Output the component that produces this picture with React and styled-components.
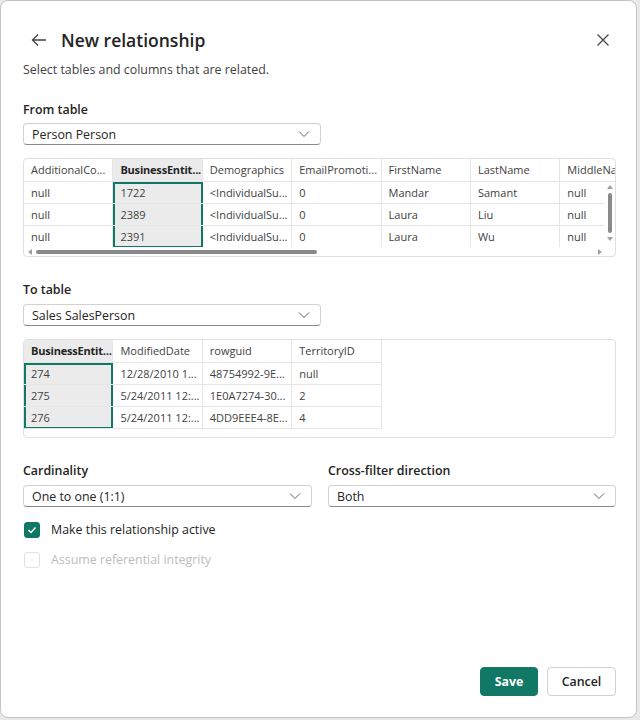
import React from "react";
import styled, { createGlobalStyle } from "styled-components";

const GREEN = "#117865";
const FONT = `"Segoe UI", "Open Sans", "Noto Sans", sans-serif`;

const Global = createGlobalStyle`
  html, body {
    margin: 0;
    padding: 0;
    background: #e9e9e9;
  }
  body {
    font-family: ${FONT};
    color: #242424;
  }
  * { box-sizing: border-box; }
`;

const Dialog = styled.div`
  width: 637px;
  height: 718px;
  background: #fff;
  border: 1px solid #c4c4c4;
  border-radius: 8px;
  padding: 0 20px 21px 22px;
  display: flex;
  flex-direction: column;
`;

const Header = styled.div`
  display: flex;
  align-items: center;
  height: 26px;
  margin-top: 26px;
`;

const IconButton = styled.button`
  border: none;
  background: none;
  padding: 0;
  display: flex;
  align-items: center;
  justify-content: center;
  color: #424242;
  cursor: pointer;
`;

const Title = styled.h1`
  margin: 0 0 0 13px;
  font-size: 17.5px;
  font-weight: 600;
  flex: 1;
`;

const Subtitle = styled.p`
  margin: 7px 0 0 0;
  font-size: 12.4px;
  color: #424242;
  line-height: 20px;
`;

const Label = styled.div`
  font-size: 12.4px;
  font-weight: 600;
  line-height: 20px;
  margin-top: ${(p) => p.$top || 0}px;
`;

const Select = styled.div`
  margin-top: ${(p) => p.$gap ?? 4}px;
  width: ${(p) => p.$width}px;
  height: 22px;
  border: 1px solid #d1d1d1;
  border-bottom-color: #8a8a8a;
  border-radius: 4px;
  display: flex;
  align-items: center;
  justify-content: space-between;
  padding: 0 10px 0 8px;
  font-size: 12.4px;
`;

const Frame = styled.div`
  margin-top: 13px;
  width: 593px;
  height: 99px;
  border: 1px solid #e0e0e0;
  border-radius: 4px;
  overflow: hidden;
  display: flex;
  flex-direction: column;
`;

const FrameTop = styled.div`
  flex: 1;
  display: flex;
  min-height: 0;
  position: relative;
`;

const Viewport = styled.div`
  flex: 1;
  min-width: 0;
  display: flex;
  align-items: flex-start;
  overflow: hidden;
`;

const Column = styled.div`
  flex: 0 0 89.4px;
  width: 89.4px;
  min-width: 0;
  display: flex;
  flex-direction: column;
  background: ${(p) => (p.$selected ? "#ebebeb" : "transparent")};
`;

const HeadCell = styled.div`
  height: 23px;
  padding: 0 7px;
  font-size: 11px;
  line-height: 22px;
  font-weight: ${(p) => (p.$selected ? 700 : 400)};
  letter-spacing: ${(p) => (p.$selected ? "-0.2px" : "0")};
  color: ${(p) => (p.$selected ? "#242424" : "#424242")};
  border-right: 1px solid #e6e6e6;
  border-bottom: 1px solid #e6e6e6;
  white-space: nowrap;
  overflow: hidden;
`;

const Body = styled.div`
  box-shadow: ${(p) => (p.$selected ? `inset 0 0 0 2px ${GREEN}` : "none")};
`;

const Cell = styled.div`
  height: 22px;
  padding: 0 7px;
  font-size: 11px;
  line-height: 22px;
  color: #424242;
  border-right: ${(p) => (p.$selected ? "none" : "1px solid #e6e6e6")};
  border-bottom: 1px solid #e6e6e6;
  white-space: nowrap;
  overflow: hidden;
`;

/* overlay scrollbar that sits over the grid body, below the header row */
const VScroll = styled.div`
  position: absolute;
  top: 23px;
  right: 0;
  bottom: 0;
  width: 11px;
  background: #fff;
  display: flex;
  flex-direction: column;
  align-items: center;
  padding-top: 2px;
  gap: 3px;
`;

const VThumb = styled.div`
  width: 4px;
  height: 40px;
  border-radius: 2px;
  background: #8a8a8a;
`;

const HScroll = styled.div`
  flex: 0 0 9px;
  display: flex;
  align-items: center;
  padding: 0 12px 0 3px;
  gap: 3px;
`;

const HThumb = styled.div`
  width: 281px;
  height: 4px;
  border-radius: 2px;
  background: #8a8a8a;
`;

const Spacer = styled.div`
  flex: 1;
`;

const Arrow = ({ dir }) => {
  const pts = {
    up: "0,5 3,1 6,5",
    down: "0,1 3,5 6,1",
    left: "5,0 1,3 5,6",
    right: "1,0 5,3 1,6",
  }[dir];
  return (
    <svg width="6" height="6" viewBox="0 0 6 6">
      <polygon points={pts} fill="#a0a0a0" />
    </svg>
  );
};

const Chevron = () => (
  <svg width="12" height="8" viewBox="0 0 12 8">
    <polyline points="1,1.5 6,6.5 11,1.5" fill="none" stroke="#616161" strokeWidth="1" />
  </svg>
);

const Row = styled.div`
  display: flex;
  gap: 16px;
  margin-top: 23px;
`;

const Field = styled.div`
  display: flex;
  flex-direction: column;
`;

const CheckRow = styled.label`
  display: flex;
  align-items: center;
  gap: 11px;
  margin-top: ${(p) => p.$top}px;
  margin-left: 1px;
  font-size: 12.4px;
  color: ${(p) => (p.$disabled ? "#bdbdbd" : "#242424")};
`;

const Box = styled.span`
  width: 16px;
  height: 16px;
  border-radius: 3px;
  display: flex;
  align-items: center;
  justify-content: center;
  background: ${(p) => (p.$checked ? GREEN : "#fff")};
  border: 1px solid ${(p) => (p.$checked ? GREEN : "#e0e0e0")};
`;

const Footer = styled.div`
  margin-top: auto;
  display: flex;
  justify-content: flex-end;
  gap: 9px;
`;

const Button = styled.button`
  height: 29px;
  padding: 0;
  width: ${(p) => (p.$primary ? 58 : 69)}px;
  border-radius: 4px;
  font-family: ${FONT};
  font-size: 12.4px;
  font-weight: ${(p) => (p.$primary ? 700 : 600)};
  background: ${(p) => (p.$primary ? GREEN : "#fff")};
  color: ${(p) => (p.$primary ? "#fff" : "#242424")};
  border: 1px solid ${(p) => (p.$primary ? GREEN : "#d1d1d1")};
`;

const fromColumns = [
  { name: "AdditionalCo...", rows: ["null", "null", "null"] },
  { name: "BusinessEntit...", rows: ["1722", "2389", "2391"], selected: true },
  { name: "Demographics", rows: ["<IndividualSu...", "<IndividualSu...", "<IndividualSu..."] },
  { name: "EmailPromoti...", rows: ["0", "0", "0"] },
  { name: "FirstName", rows: ["Mandar", "Laura", "Laura"] },
  { name: "LastName", rows: ["Samant", "Liu", "Wu"] },
  { name: "MiddleNa", rows: ["null", "null", "null"] },
];

const toColumns = [
  { name: "BusinessEntit...", rows: ["274", "275", "276"], selected: true },
  { name: "ModifiedDate", rows: ["12/28/2010 1...", "5/24/2011 12:...", "5/24/2011 12:..."] },
  { name: "rowguid", rows: ["48754992-9E...", "1E0A7274-30...", "4DD9EEE4-8E..."] },
  { name: "TerritoryID", rows: ["null", "2", "4"] },
];

const DataColumn = ({ col }) => (
  <Column $selected={col.selected}>
    <HeadCell $selected={col.selected}>{col.name}</HeadCell>
    <Body $selected={col.selected}>
      {col.rows.map((r, i) => (
        <Cell key={i} $selected={col.selected}>
          {r}
        </Cell>
      ))}
    </Body>
  </Column>
);

const Preview = ({ columns, scroll }) => (
  <Frame>
    <FrameTop>
      <Viewport>
        {columns.map((c) => (
          <DataColumn key={c.name} col={c} />
        ))}
      </Viewport>
      {scroll && (
        <VScroll>
          <Arrow dir="up" />
          <VThumb />
          <Arrow dir="down" />
        </VScroll>
      )}
    </FrameTop>
    {scroll && (
      <HScroll>
        <Arrow dir="left" />
        <HThumb />
        <Spacer />
        <Arrow dir="right" />
      </HScroll>
    )}
  </Frame>
);

export default function App() {
  return (
    <>
      <Global />
      <Dialog>
        <Header>
          <IconButton style={{ marginLeft: 7 }}>
            <svg width="18" height="18" viewBox="0 0 18 18">
              <path d="M16 9H2.5M8 3.5L2.5 9L8 14.5" fill="none" stroke="#424242" strokeWidth="1.3" />
            </svg>
          </IconButton>
          <Title>New relationship</Title>
          <IconButton style={{ marginRight: 6 }}>
            <svg width="14" height="14" viewBox="0 0 14 14">
              <path d="M1.5 1.5L12.5 12.5M12.5 1.5L1.5 12.5" stroke="#424242" strokeWidth="1.2" />
            </svg>
          </IconButton>
        </Header>
        <Subtitle>Select tables and columns that are related.</Subtitle>

        <Label $top={20}>From table</Label>
        <Select $width={298} $gap={3}>
          <span>Person Person</span>
          <Chevron />
        </Select>
        <Preview columns={fromColumns} scroll />

        <Label $top={23}>To table</Label>
        <Select $width={298}>
          <span>Sales SalesPerson</span>
          <Chevron />
        </Select>
        <Preview columns={toColumns} />

        <Row>
          <Field>
            <Label>Cardinality</Label>
            <Select $width={289}>
              <span>One to one (1:1)</span>
              <Chevron />
            </Select>
          </Field>
          <Field>
            <Label>Cross-filter direction</Label>
            <Select $width={288}>
              <span>Both</span>
              <Chevron />
            </Select>
          </Field>
        </Row>

        <CheckRow $top={14}>
          <Box $checked>
            <svg width="10" height="8" viewBox="0 0 10 8">
              <polyline points="1.5,4 4,6.5 8.5,1.5" fill="none" stroke="#fff" strokeWidth="1.5" />
            </svg>
          </Box>
          Make this relationship active
        </CheckRow>
        <CheckRow $top={13} $disabled>
          <Box />
          Assume referential integrity
        </CheckRow>

        <Footer>
          <Button $primary>Save</Button>
          <Button>Cancel</Button>
        </Footer>
      </Dialog>
    </>
  );
}
